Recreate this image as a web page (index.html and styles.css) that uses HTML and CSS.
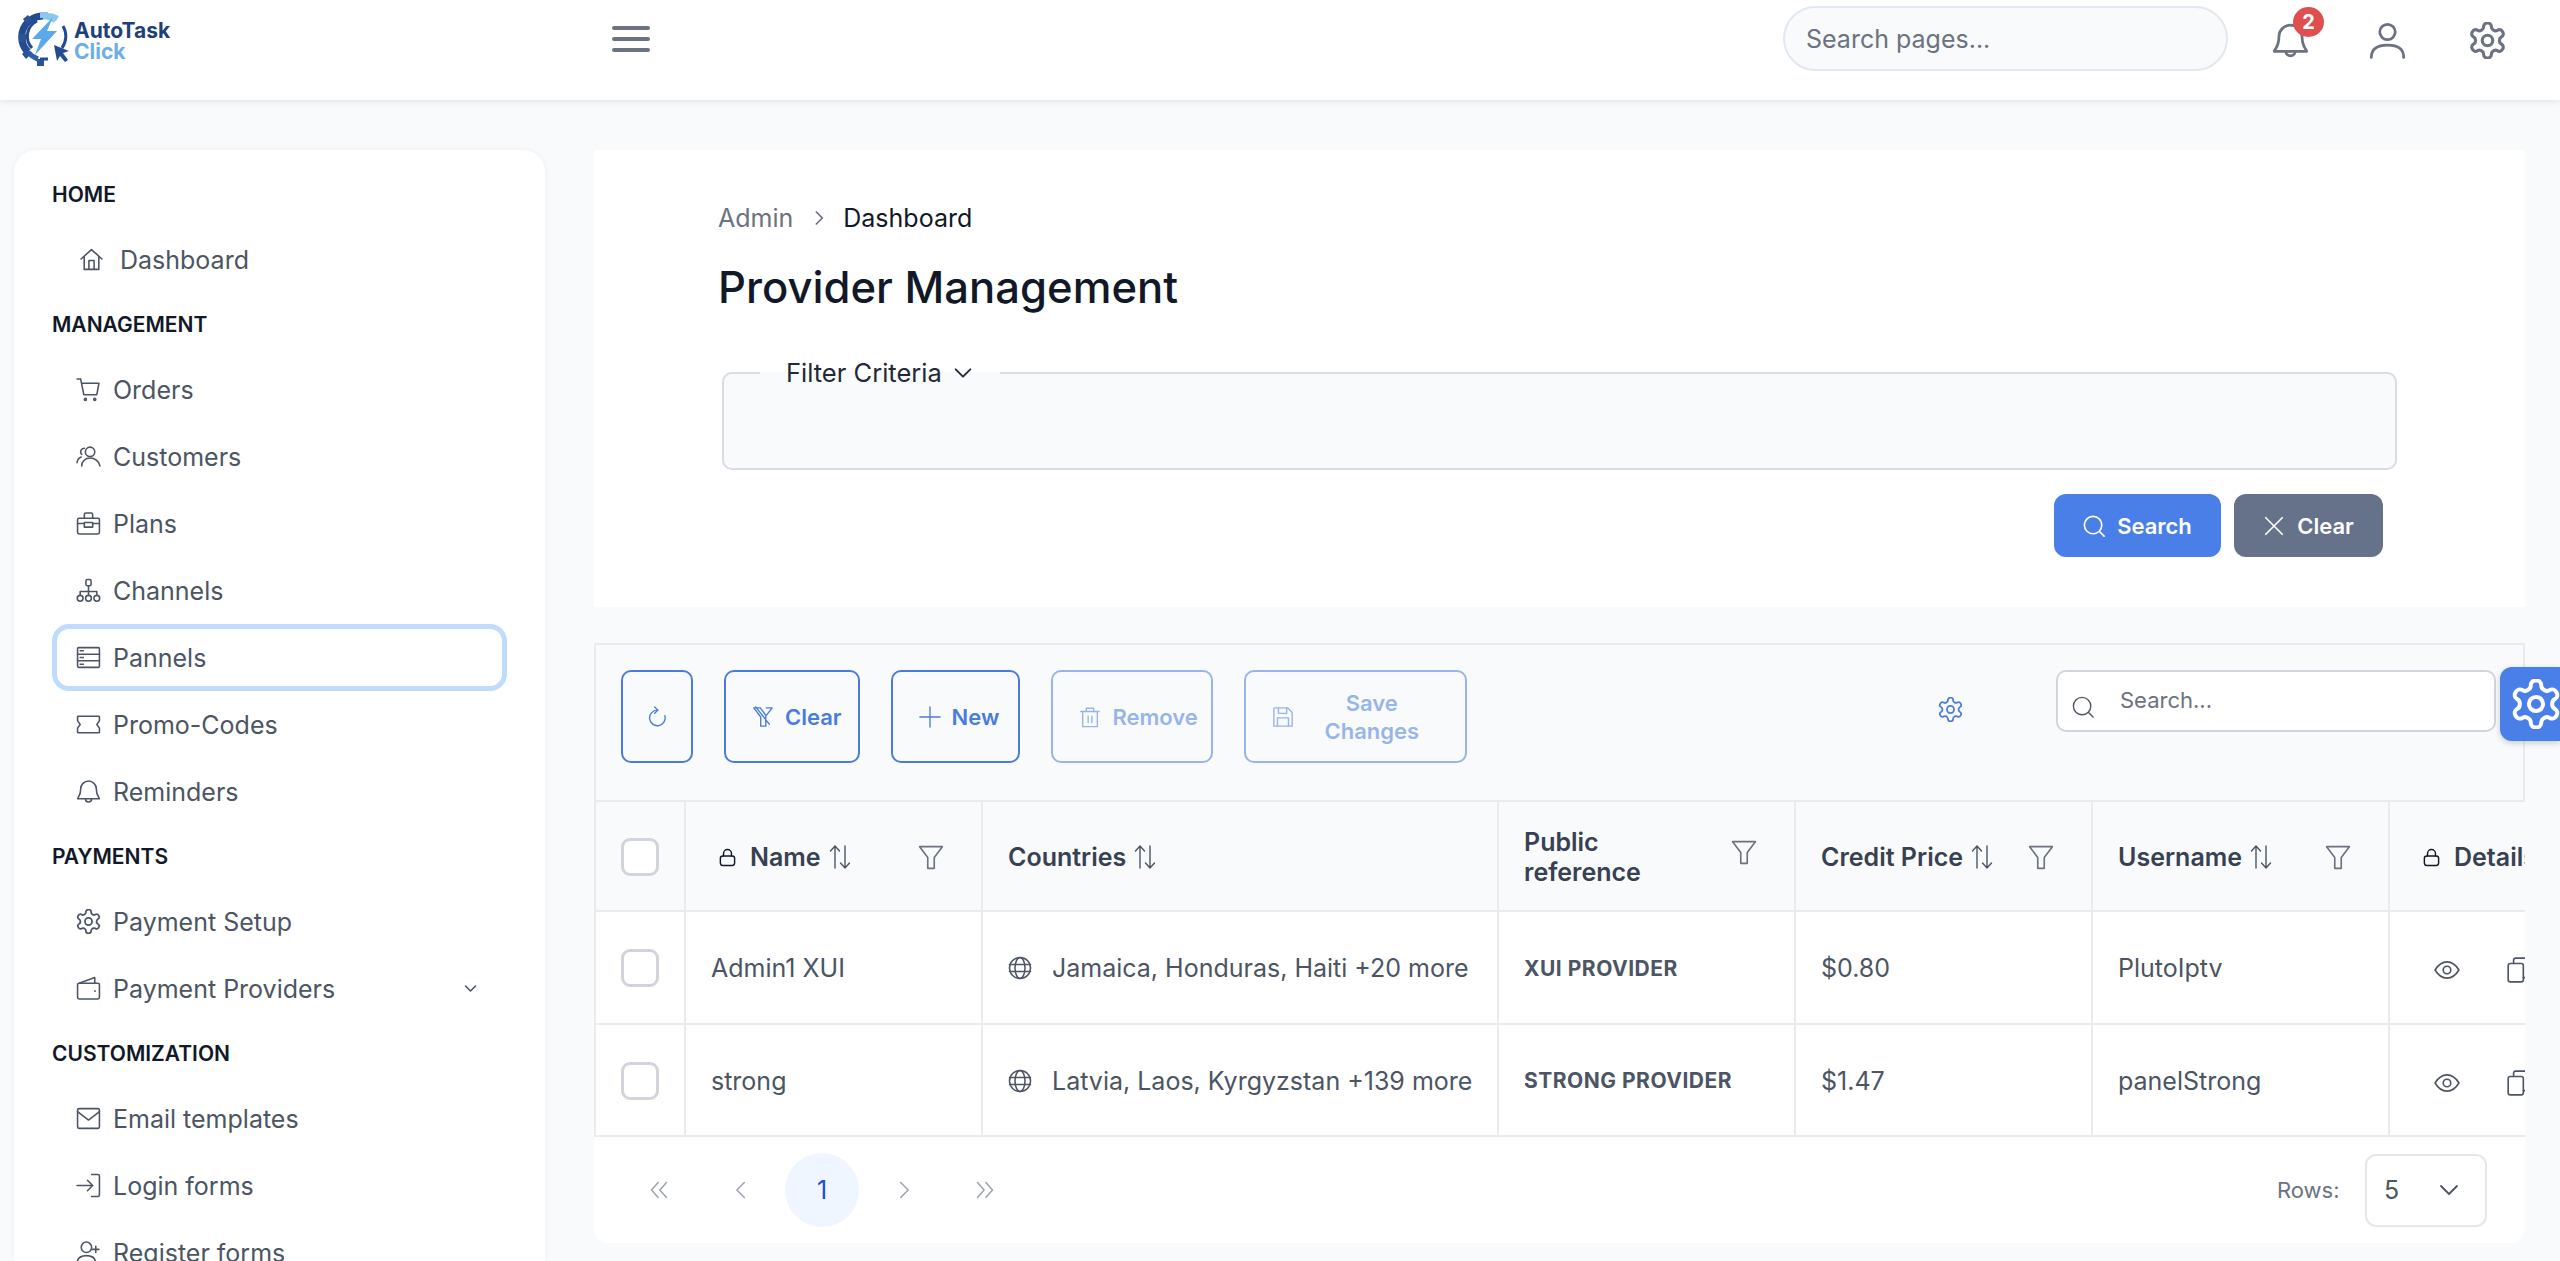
FILE: index.html
```html
<!DOCTYPE html>
<html lang="en">
<head>
  <meta charset="UTF-8">
  <meta name="viewport" content="width=device-width, initial-scale=1.0">
  <title>Provider Management</title>
  <link rel="stylesheet" href="styles.css">
</head>
<body>
  <!-- icon set, reused with <use> below -->
  <svg class="sprite" aria-hidden="true">
    <symbol id="i-home" viewBox="0 0 24 24"><path d="M2 11.5 12 2.5l10 9M5 9v12.5h14V9M9.5 21.5V13h5v8.5"/></symbol>
    <symbol id="i-cart" viewBox="0 0 24 24"><path d="M1 2h3.5l3 15h12.5l2-11H5.5"/><circle cx="9" cy="21.5" r="1"/><circle cx="18" cy="21.5" r="1"/></symbol>
    <symbol id="i-users" viewBox="0 0 24 24"><circle cx="13.5" cy="7.5" r="4.5"/><path d="M5.5 21c0-4.5 3.5-7.5 8-7.5s8.500 3 9.500 7.500M8 4a3.500 3.500 0 0 0-2.500 6M1 18c.2-2.500 1.500-4.500 4-5.500"/></symbol>
    <symbol id="i-briefcase" viewBox="0 0 24 24"><rect x="1.500" y="7" width="21" height="15" rx="1.500"/><path d="M8 7V3.500A1.500 1.500 0 0 1 9.500 2h5A1.500 1.500 0 0 1 16 3.500V7M1.500 12H8M16 12h6.500"/><rect x="8" y="11" width="8" height="4.500"/></symbol>
    <symbol id="i-sitemap" viewBox="0 0 24 24"><rect x="9.500" y="1.500" width="5" height="6" rx="1.500"/><path d="M12 7.500V16M4 16v-3h16v3"/><circle cx="4" cy="19.500" r="2.800"/><circle cx="12" cy="19.500" r="2.800"/><circle cx="20" cy="19.500" r="2.800"/></symbol>
    <symbol id="i-server" viewBox="0 0 24 24"><rect x="1.500" y="2.500" width="21" height="19" rx="1"/><path d="M1.500 8.800h21M1.500 15.200h21M4 5.600h3M4 12h3M4 18.400h3"/></symbol>
    <symbol id="i-ticket" viewBox="0 0 24 24"><path d="M2 4h20a1 1 0 0 1 .5 1v3.500l-2.500 3.500 2.500 3.500V19a1 1 0 0 1-.5 1H2a1 1 0 0 1-.5-1v-3.500L4 12 1.500 8.500V5A1 1 0 0 1 2 4z"/></symbol>
    <symbol id="i-bell" viewBox="0 0 24 24"><path d="M12 2a7.500 7.500 0 0 0-7.500 7.500c0 6-2.500 8-3 9.500h21c-.5-1.500-3-3.500-3-9.500A7.500 7.500 0 0 0 12 2zM9 19a3 3 0 0 0 6 0"/></symbol>
    <symbol id="i-user" viewBox="0 0 24 24"><circle cx="12" cy="6.500" r="5"/><path d="M1.500 23c0-5.500 3.500-8 10.500-8s10.500 2.500 10.500 8"/></symbol>
    <symbol id="i-cog" viewBox="1.400 1.400 21.200 21.200"><path d="M12.220 2h-.44a2 2 0 0 0-2 2v.18a2 2 0 0 1-1 1.730l-.43.25a2 2 0 0 1-2 0l-.15-.08a2 2 0 0 0-2.730.73l-.22.38a2 2 0 0 0 .73 2.730l.15.1a2 2 0 0 1 1 1.720v.51a2 2 0 0 1-1 1.740l-.15.09a2 2 0 0 0-.73 2.730l.22.38a2 2 0 0 0 2.730.73l.15-.08a2 2 0 0 1 2 0l.43.25a2 2 0 0 1 1 1.730V20a2 2 0 0 0 2 2h.44a2 2 0 0 0 2-2v-.18a2 2 0 0 1 1-1.730l.43-.25a2 2 0 0 1 2 0l.15.08a2 2 0 0 0 2.730-.73l.22-.39a2 2 0 0 0-.73-2.730l-.15-.08a2 2 0 0 1-1-1.740v-.5a2 2 0 0 1 1-1.740l.15-.09a2 2 0 0 0 .73-2.730l-.22-.38a2 2 0 0 0-2.730-.73l-.15.08a2 2 0 0 1-2 0l-.43-.25a2 2 0 0 1-1-1.730V4a2 2 0 0 0-2-2z"/><circle cx="12" cy="12" r="3"/></symbol>
    <symbol id="i-wallet" viewBox="0 0 24 24"><rect x="1.500" y="7" width="21" height="15" rx="1.500"/><path d="M3 7 18 1.500V7M18 14.500h.5"/></symbol>
    <symbol id="i-mail" viewBox="0 0 24 24"><rect x="1.500" y="2.500" width="21" height="19" rx="1.500"/><path d="M1.500 5.500 12 13.500l10.500-8"/></symbol>
    <symbol id="i-signin" viewBox="0 0 24 24"><path d="M15 1.500h6a1.500 1.500 0 0 1 1.500 1.500v18a1.500 1.500 0 0 1-1.500 1.500h-6M1 12h15M11 7l5 5-5 5"/></symbol>
    <symbol id="i-userplus" viewBox="0 0 24 24"><circle cx="10" cy="7" r="5"/><path d="M1 23c0-5.500 3.500-8 9-8s9 2.500 9 8M19 6v6M16 9h6"/></symbol>
    <symbol id="i-chev-down" viewBox="0 0 24 24"><path d="M4 8l8 8 8-8"/></symbol>
    <symbol id="i-search" viewBox="0 0 24 24"><circle cx="11" cy="11" r="9.500"/><path d="M18 18l5 5"/></symbol>
    <symbol id="i-x" viewBox="0 0 24 24"><path d="M3 3l18 18M21 3 3 21"/></symbol>
    <symbol id="i-refresh" viewBox="0 0 24 24"><path d="M12.500 4.500a8.500 8.500 0 1 0 8 6M9.500 1l3.500 3.500L9.500 8"/></symbol>
    <symbol id="i-filter-slash" viewBox="0 0 24 24"><path d="M2 2h7M9 2l6 8M15.500 2H22l-7 9v11H9.500V12L2 2M4 1l15 19"/></symbol>
    <symbol id="i-plus" viewBox="0 0 24 24"><path d="M12 1v22M1 12h22"/></symbol>
    <symbol id="i-trash" viewBox="0 0 24 24"><path d="M2 6h20M8 6V2.500h8V6M4 6v16.500h16V6M10 11v7M14 11v7"/></symbol>
    <symbol id="i-save" viewBox="0 0 24 24"><path d="M3 2h14l5 5v15H2V3zM7 2v6h9V2M6 22v-9h12v9"/></symbol>
    <symbol id="i-lock" viewBox="0 0 24 24"><rect x="3" y="10" width="18" height="12" rx="3"/><path d="M7 10V7a5 5 0 0 1 10 0v3"/></symbol>
    <symbol id="i-sort" viewBox="0 0 24 24"><path d="M7 23V1M2.500 6 7 1l4.500 5M17 1v22M12.500 18l4.500 5 4.500-5"/></symbol>
    <symbol id="i-filter" viewBox="0 0 24 24"><path d="M1.500 2h21L15 12v10H9V12z"/></symbol>
    <symbol id="i-globe" viewBox="0 0 24 24"><circle cx="12" cy="12" r="10.500"/><ellipse cx="12" cy="12" rx="5" ry="10.500"/><path d="M1.500 8.500h21M1.500 15.500h21"/></symbol>
    <symbol id="i-eye" viewBox="0 0 24 24"><path d="M1 12c3-5 6.500-7.500 11-7.500S20 7 23 12c-3 5-6.500 7.500-11 7.500S4 17 1 12z"/><circle cx="12" cy="12" r="3.500"/></symbol>
    <symbol id="i-copy" viewBox="0 0 24 24"><rect x="2" y="6" width="14" height="17" rx="2"/><path d="M7 6V3a2 2 0 0 1 2-2h11a2 2 0 0 1 2 2v14a2 2 0 0 1-2 2h-4"/></symbol>
    <symbol id="i-first" viewBox="0 0 24 24"><path d="M11 3 3 12l8 9M21 3l-8 9 8 9"/></symbol>
    <symbol id="i-prev" viewBox="0 0 24 24"><path d="M16 3 7 12l9 9"/></symbol>
    <symbol id="i-next" viewBox="0 0 24 24"><path d="M8 3l9 9-9 9"/></symbol>
    <symbol id="i-last" viewBox="0 0 24 24"><path d="M3 3l8 9-8 9M13 3l8 9-8 9"/></symbol>
  </svg>

  <header class="topbar">
    <div class="logo">
      <svg class="logo-mark" viewBox="0 0 52 54">
        <path d="M25 4a21 21 0 0 0-15 36" fill="none" stroke="#234b8f" stroke-width="7"/>
        <path d="M10 40a21 21 0 0 0 10 7" fill="none" stroke="#2f5ea8" stroke-width="5"/>
        <path d="M1 22h7v8H1zM5 7l5-4 4 5-5 4zM4 42l5-5 4 5-5 5zM19 47h7v7h-7z" fill="#2a5496"/>
        <path d="M25 4a21 21 0 0 1 13 4" fill="none" stroke="#8cc8ee" stroke-width="7"/>
        <path d="M33 1l8 3-3 5-7-3zM22 0h8v6h-8z" fill="#8cc8ee"/>
        <path d="M45 14a20 20 0 0 1-1 22" fill="none" stroke="#234b8f" stroke-width="3"/>
        <path d="M14 36a17 17 0 0 1 5-27" fill="none" stroke="#234b8f" stroke-width="3"/>
        <path d="M35 5 14 27h9l-6 16 22-24h-10z" fill="#5aa9ea"/>
        <path d="M22 47h8" stroke="#234b8f" stroke-width="3"/>
        <path d="M36 33l15 6-6 2 5 7-3 2-5-6-3 5z" fill="#234b8f"/>
      </svg>
      <div class="logo-text"><span>AutoTask</span><span class="logo-click">Click</span></div>
    </div>
    <div class="burger"><i></i><i></i><i></i></div>
    <input class="page-search" type="text" placeholder="Search pages...">
    <div class="bell-wrap">
      <svg class="icon top-icon"><use href="#i-bell"/></svg>
      <span class="badge">2</span>
    </div>
    <svg class="icon top-icon user-icon"><use href="#i-user"/></svg>
    <svg class="icon top-icon cog-icon"><use href="#i-cog"/></svg>
  </header>

  <div class="layout">
    <nav class="sidebar">
      <div class="nav-title">HOME</div>
      <a class="nav-item nav-dash"><svg class="icon"><use href="#i-home"/></svg>Dashboard</a>
      <div class="nav-title">MANAGEMENT</div>
      <a class="nav-item"><svg class="icon"><use href="#i-cart"/></svg>Orders</a>
      <a class="nav-item"><svg class="icon"><use href="#i-users"/></svg>Customers</a>
      <a class="nav-item"><svg class="icon"><use href="#i-briefcase"/></svg>Plans</a>
      <a class="nav-item"><svg class="icon"><use href="#i-sitemap"/></svg>Channels</a>
      <a class="nav-item active"><svg class="icon"><use href="#i-server"/></svg>Pannels</a>
      <a class="nav-item"><svg class="icon"><use href="#i-ticket"/></svg>Promo-Codes</a>
      <a class="nav-item"><svg class="icon"><use href="#i-bell"/></svg>Reminders</a>
      <div class="nav-title">PAYMENTS</div>
      <a class="nav-item"><svg class="icon"><use href="#i-cog"/></svg>Payment Setup</a>
      <a class="nav-item"><svg class="icon"><use href="#i-wallet"/></svg>Payment Providers<svg class="icon nav-chev"><use href="#i-chev-down"/></svg></a>
      <div class="nav-title">CUSTOMIZATION</div>
      <a class="nav-item"><svg class="icon"><use href="#i-mail"/></svg>Email templates</a>
      <a class="nav-item"><svg class="icon"><use href="#i-signin"/></svg>Login forms</a>
      <a class="nav-item"><svg class="icon"><use href="#i-userplus"/></svg>Register forms</a>
    </nav>

    <main class="content">
      <section class="filter-card">
        <div class="crumbs">
          <span class="crumb-link">Admin</span>
          <svg class="icon crumb-sep"><use href="#i-next"/></svg>
          <span>Dashboard</span>
        </div>
        <h1>Provider Management</h1>
        <fieldset class="criteria">
          <legend>Filter Criteria <svg class="icon legend-chev"><use href="#i-chev-down"/></svg></legend>
        </fieldset>
        <div class="filter-actions">
          <button class="solid-btn btn-search"><svg class="icon"><use href="#i-search"/></svg>Search</button>
          <button class="solid-btn btn-clear"><svg class="icon"><use href="#i-x"/></svg>Clear</button>
        </div>
      </section>

      <section class="table-card">
        <div class="toolbar">
          <button class="tool-btn tool-refresh"><svg class="icon"><use href="#i-refresh"/></svg></button>
          <button class="tool-btn tool-clear"><svg class="icon"><use href="#i-filter-slash"/></svg>Clear</button>
          <button class="tool-btn"><svg class="icon"><use href="#i-plus"/></svg>New</button>
          <button class="tool-btn disabled tool-remove"><svg class="icon"><use href="#i-trash"/></svg>Remove</button>
          <button class="tool-btn disabled tool-save"><svg class="icon"><use href="#i-save"/></svg><span>Save Changes</span></button>
          <svg class="icon tool-cog"><use href="#i-cog"/></svg>
          <label class="table-search">
            <svg class="icon"><use href="#i-search"/></svg>
            <input type="text" placeholder="Search...">
          </label>
        </div>

        <div class="table-wrap">
          <table>
            <colgroup>
              <col class="c-check"><col class="c-name"><col class="c-countries"><col class="c-ref"><col class="c-price"><col class="c-user"><col class="c-detail">
            </colgroup>
            <thead>
              <tr>
                <th><span class="check"></span></th>
                <th class="th-locked">
                  <div class="th-row">
                    <span class="th-label"><svg class="icon lock"><use href="#i-lock"/></svg>Name<svg class="icon sort"><use href="#i-sort"/></svg></span>
                    <svg class="icon funnel"><use href="#i-filter"/></svg>
                  </div>
                </th>
                <th><div class="th-row"><span class="th-label">Countries<svg class="icon sort"><use href="#i-sort"/></svg></span></div></th>
                <th>
                  <div class="th-row th-two">
                    <span class="th-label th-wrap">Public reference</span>
                    <svg class="icon funnel"><use href="#i-filter"/></svg>
                  </div>
                </th>
                <th>
                  <div class="th-row">
                    <span class="th-label">Credit Price<svg class="icon sort"><use href="#i-sort"/></svg></span>
                    <svg class="icon funnel"><use href="#i-filter"/></svg>
                  </div>
                </th>
                <th>
                  <div class="th-row">
                    <span class="th-label">Username<svg class="icon sort"><use href="#i-sort"/></svg></span>
                    <svg class="icon funnel"><use href="#i-filter"/></svg>
                  </div>
                </th>
                <th class="th-locked th-details"><div class="th-row"><span class="th-label"><svg class="icon lock"><use href="#i-lock"/></svg>Details</span></div></th>
              </tr>
            </thead>
            <tbody>
              <tr>
                <td><span class="check"></span></td>
                <td class="td-name">Admin1 XUI</td>
                <td><span class="country"><svg class="icon"><use href="#i-globe"/></svg>Jamaica, Honduras, Haiti +20 more</span></td>
                <td class="td-ref">XUI PROVIDER</td>
                <td>$0.80</td>
                <td>PlutoIptv</td>
                <td class="td-actions"><svg class="icon"><use href="#i-eye"/></svg><svg class="icon"><use href="#i-copy"/></svg></td>
              </tr>
              <tr>
                <td><span class="check"></span></td>
                <td class="td-name">strong</td>
                <td><span class="country"><svg class="icon"><use href="#i-globe"/></svg>Latvia, Laos, Kyrgyzstan +139 more</span></td>
                <td class="td-ref">STRONG PROVIDER</td>
                <td>$1.47</td>
                <td>panelStrong</td>
                <td class="td-actions"><svg class="icon"><use href="#i-eye"/></svg><svg class="icon"><use href="#i-copy"/></svg></td>
              </tr>
            </tbody>
          </table>
        </div>

        <div class="table-foot">
          <button class="page-btn"><svg class="icon"><use href="#i-first"/></svg></button>
          <button class="page-btn"><svg class="icon"><use href="#i-prev"/></svg></button>
          <button class="page-btn current">1</button>
          <button class="page-btn"><svg class="icon"><use href="#i-next"/></svg></button>
          <button class="page-btn"><svg class="icon"><use href="#i-last"/></svg></button>
          <span class="rows-label">Rows:</span>
          <div class="rows-select">5<svg class="icon"><use href="#i-chev-down"/></svg></div>
        </div>
      </section>
    </main>
  </div>

  <button class="float-cog"><svg class="icon"><use href="#i-cog"/></svg></button>
</body>
</html>
```

FILE: styles.css
```css
* {
  box-sizing: border-box;
}

html,
body {
  height: 100%;
}

body {
  margin: 0;
  height: 1261px;
  overflow: hidden;
  background-color: #f8fafc;
  font-family: Inter, "Liberation Sans", sans-serif;
  color: #4b5563;
}

.sprite {
  display: none;
}

.icon {
  width: 24px;
  height: 24px;
  flex: none;
  fill: none;
  stroke: currentColor;
  stroke-width: 1.5;
  stroke-linecap: round;
  stroke-linejoin: round;
}

/* top bar */
.topbar {
  display: flex;
  align-items: flex-start;
  height: 100px;
  padding: 6px 54px 0 18px;
  background-color: #fff;
  box-shadow: 0 2px 6px rgba(0, 0, 0, 0.09);
  position: relative;
}

.logo {
  display: flex;
  width: 594px;
  margin-top: 6px;
}

.logo-mark {
  width: 52px;
  height: 54px;
  flex: none;
}

.logo-text {
  display: flex;
  flex-direction: column;
  margin: 8px 0 0 4px;
  font-size: 21px;
  font-weight: 700;
  line-height: 21px;
  color: #1e4079;
}

.logo-click {
  color: #6caeea;
}

.burger {
  display: flex;
  flex-direction: column;
  justify-content: space-between;
  width: 38px;
  height: 26px;
  margin-top: 20px;
}

.burger i {
  display: block;
  height: 4px;
  border-radius: 2px;
  background-color: #6b7280;
}

.page-search {
  width: 445px;
  height: 65px;
  margin-left: auto;
  padding: 0 21px;
  border: 2px solid #e2e8f0;
  border-radius: 33px;
  background-color: #f8fafc;
  font: 400 25px Inter, sans-serif;
  color: #4b5563;
  outline: none;
}

.page-search::placeholder,
.table-search input::placeholder {
  color: #6b7280;
  opacity: 1;
}

.top-icon {
  width: 37px;
  height: 37px;
  margin-top: 16px;
  color: #6b7280;
  stroke-width: 1.8;
}

.bell-wrap {
  position: relative;
  margin-left: 44px;
}

.badge {
  position: absolute;
  top: 1px;
  left: 21px;
  width: 31px;
  height: 30px;
  border-radius: 50%;
  background-color: #e04f4f;
  color: #fff;
  font-size: 20px;
  font-weight: 700;
  line-height: 30px;
  text-align: center;
}

.user-icon {
  margin-left: 60px;
}

.cog-icon {
  margin-left: 63px;
}

/* page columns */
.layout {
  display: flex;
  align-items: stretch;
  gap: 49px;
  height: 1161px;
  padding: 50px 35px 0 14px;
  overflow: hidden;
}

/* sidebar */
.sidebar {
  width: 531px;
  flex: none;
  padding-top: 13px;
  overflow: hidden;
  background-color: #fff;
  border-radius: 22px 22px 0 0;
  box-shadow: 0 0 6px rgba(0, 0, 0, 0.05);
}

.nav-title {
  display: flex;
  align-items: center;
  height: 63px;
  padding-left: 38px;
  font-size: 21px;
  font-weight: 600;
  color: #111827;
}

.nav-item {
  display: flex;
  align-items: center;
  gap: 12px;
  width: 455px;
  height: 67px;
  margin-left: 38px;
  padding: 0 29px 0 24px;
  font-size: 25px;
  color: #4b5563;
}

.nav-item .icon {
  width: 25px;
  height: 25px;
}

.nav-dash {
  gap: 16px;
  padding-left: 27px;
}

.nav-item.active {
  border: 5px solid #bfdbfe;
  border-radius: 17px;
  padding-left: 19px;
}

.nav-item .nav-chev {
  width: 15px;
  height: 15px;
  margin-left: auto;
  stroke-width: 2.6;
}

/* filter card */
.content {
  flex: 1;
  min-width: 0;
}

.filter-card {
  height: 457px;
  padding: 50px 128px 0 124px;
  background-color: #fff;
}

.crumbs {
  display: flex;
  align-items: center;
  height: 36px;
  font-size: 25px;
  color: #111827;
}

.crumb-link {
  color: #6b7280;
}

.crumb-sep {
  width: 16px;
  height: 16px;
  margin: 0 16px 0 18px;
  color: #6b7280;
  stroke-width: 2.6;
}

h1 {
  margin: 24px 0 0;
  font-size: 43.6px;
  font-weight: 500;
  line-height: 56px;
  color: #111827;
}

.criteria {
  height: 112px;
  margin: 42px 0 0 4px;
  padding: 0 0 0 36px;
  border: 2px solid #d9dde3;
  border-radius: 10px;
  background-color: #f8fafc;
}

legend {
  display: flex;
  align-items: center;
  gap: 10px;
  padding: 0 26px;
  font-size: 25.500px;
  line-height: 30px;
  color: #1f2937;
}

.legend-chev {
  width: 22px;
  height: 22px;
  stroke-width: 2;
}

.filter-actions {
  display: flex;
  justify-content: flex-end;
  gap: 13px;
  margin: 24px 14px 0 0;
}

.solid-btn {
  display: flex;
  align-items: center;
  justify-content: center;
  gap: 12px;
  height: 63px;
  border: none;
  border-radius: 12px;
  color: #fff;
  font: 600 22px Inter, sans-serif;
}

.solid-btn .icon {
  width: 22px;
  height: 22px;
  stroke-width: 1.8;
}

.btn-search {
  width: 167px;
  background-color: #4a7fe8;
}

.btn-clear {
  width: 149px;
  background-color: #66728a;
}

/* table card */
.table-card {
  margin-top: 36px;
  height: 600px;
  background-color: #fff;
  border-radius: 0 0 14px 14px;
}

.toolbar {
  display: flex;
  align-items: flex-start;
  gap: 31px;
  height: 157px;
  padding: 25px 27px 0 25px;
  background-color: #f9fafb;
  border: 2px solid #e9ebef;
  border-bottom: none;
}

.tool-btn {
  display: flex;
  align-items: center;
  gap: 11px;
  height: 93px;
  padding: 0 19px 0 26px;
  border: 2px solid #4a7ddb;
  border-radius: 10px;
  background-color: transparent;
  color: #4a7ddb;
  font: 600 22px/28px Inter, sans-serif;
}

.tool-btn .icon {
  width: 22px;
  height: 22px;
}

.tool-btn.disabled {
  opacity: 0.55;
}

.tool-refresh {
  width: 72px;
  justify-content: center;
  padding: 0;
}

.tool-clear {
  padding-right: 16px;
}

.tool-remove {
  padding-right: 13px;
}

.tool-save {
  width: 223px;
  padding-right: 26px;
}

.tool-save span {
  flex: 1;
  text-align: center;
}

.tool-cog {
  width: 25px;
  height: 25px;
  margin: 27px 62px 0 auto;
  color: #4a7ddb;
}

.table-search {
  display: flex;
  align-items: flex-start;
  width: 440px;
  height: 62px;
  padding-left: 14px;
  border: 2px solid #d1d5db;
  border-radius: 10px;
  background-color: #fff;
}

.table-search .icon {
  margin-top: 24px;
  width: 22px;
  height: 22px;
  color: #4b5563;
}

.table-search input {
  flex: 1;
  min-width: 0;
  height: 56px;
  margin-left: 24px;
  border: none;
  outline: none;
  background: transparent;
  font: 400 22px Inter, sans-serif;
}

.table-wrap {
  overflow: hidden;
  border-left: 2px solid #e9ebef;
}

table {
  width: 2000px;
  table-layout: fixed;
  border-collapse: separate;
  border-spacing: 0;
}

.c-check { width: 90px; }
.c-name { width: 297px; }
.c-countries { width: 516px; }
.c-ref,
.c-price,
.c-user,
.c-detail { width: 297px; }

th,
td {
  padding: 0 37px 0 25px;
  border-right: 2px solid #e9ebef;
  border-bottom: 2px solid #e9ebef;
  text-align: left;
}

th {
  height: 112px;
  padding-top: 2px;
  border-top: 2px solid #e9ebef;
  background-color: #f9fafb;
  font-size: 25px;
  font-weight: 600;
  color: #374151;
}

td {
  height: 112.5px;
  padding-top: 2px;
  font-size: 25px;
  color: #4b5563;
}

th:first-child,
td:first-child {
  padding-left: 25px;
  padding-right: 0;
}

.check {
  display: block;
  width: 38px;
  height: 38px;
  border: 3px solid #d1d5db;
  border-radius: 9px;
  background-color: #fff;
}

.th-row {
  display: flex;
  align-items: center;
  justify-content: space-between;
}

.th-label {
  display: flex;
  align-items: center;
  line-height: 30px;
}

.th-wrap {
  width: 120px;
}

.th-two .funnel {
  margin-bottom: 10px;
}

.th-locked {
  padding-left: 32px;
}

.lock {
  width: 19px;
  height: 19px;
  margin-right: 13px;
  color: #111827;
  stroke-width: 1.8;
}

.sort {
  width: 24px;
  height: 28px;
  margin-left: 7px;
  color: #4b5563;
  stroke-width: 1.4;
}

.funnel {
  width: 26px;
  height: 27px;
  color: #6b7280;
}

.td-name {
  padding-left: 25px;
}

.country {
  display: flex;
  align-items: center;
  gap: 20px;
  white-space: nowrap;
}

.country .icon {
  width: 24px;
  height: 24px;
  color: #4b5563;
}

.td-ref {
  font-size: 21px;
  font-weight: 700;
  letter-spacing: 0.5px;
  white-space: nowrap;
}

.td-actions {
  padding-left: 44px;
  white-space: nowrap;
}

.td-actions .icon {
  width: 26px;
  height: 26px;
  margin-right: 46px;
  color: #4b5563;
  vertical-align: middle;
}

.table-foot {
  display: flex;
  align-items: center;
  gap: 7.5px;
  height: 106px;
  padding: 0 38px 0 28px;
}

.page-btn {
  display: flex;
  align-items: center;
  justify-content: center;
  width: 74px;
  height: 74px;
  border: none;
  border-radius: 50%;
  background: transparent;
  color: #9ca3af;
  font: 400 25px Inter, sans-serif;
}

.page-btn .icon {
  width: 20px;
  height: 20px;
  stroke-width: 1.8;
}

.page-btn.current {
  background-color: #eff6ff;
  color: #1d4ed8;
}

.rows-label {
  margin: 0 18px 0 auto;
  font-size: 22px;
  color: #6b7280;
}

.rows-select {
  display: flex;
  align-items: center;
  justify-content: space-between;
  width: 122px;
  height: 73px;
  padding: 0 24px 0 17px;
  border: 2px solid #e5e7eb;
  border-radius: 11px;
  font-size: 25px;
}

.rows-select .icon {
  width: 24px;
  height: 24px;
  stroke-width: 1.8;
}

/* floating settings tab */
.float-cog {
  position: absolute;
  top: 667px;
  right: 0;
  width: 60px;
  height: 74px;
  padding: 0 0 0 11px;
  border: none;
  border-radius: 12px 0 0 12px;
  background-color: #4a7fe8;
  color: #fff;
  text-align: left;
  box-shadow: 0 2px 6px rgba(0, 0, 0, 0.2);
}

.float-cog .icon {
  display: block;
  width: 50px;
  height: 50px;
  stroke-width: 1.7;
}
```
